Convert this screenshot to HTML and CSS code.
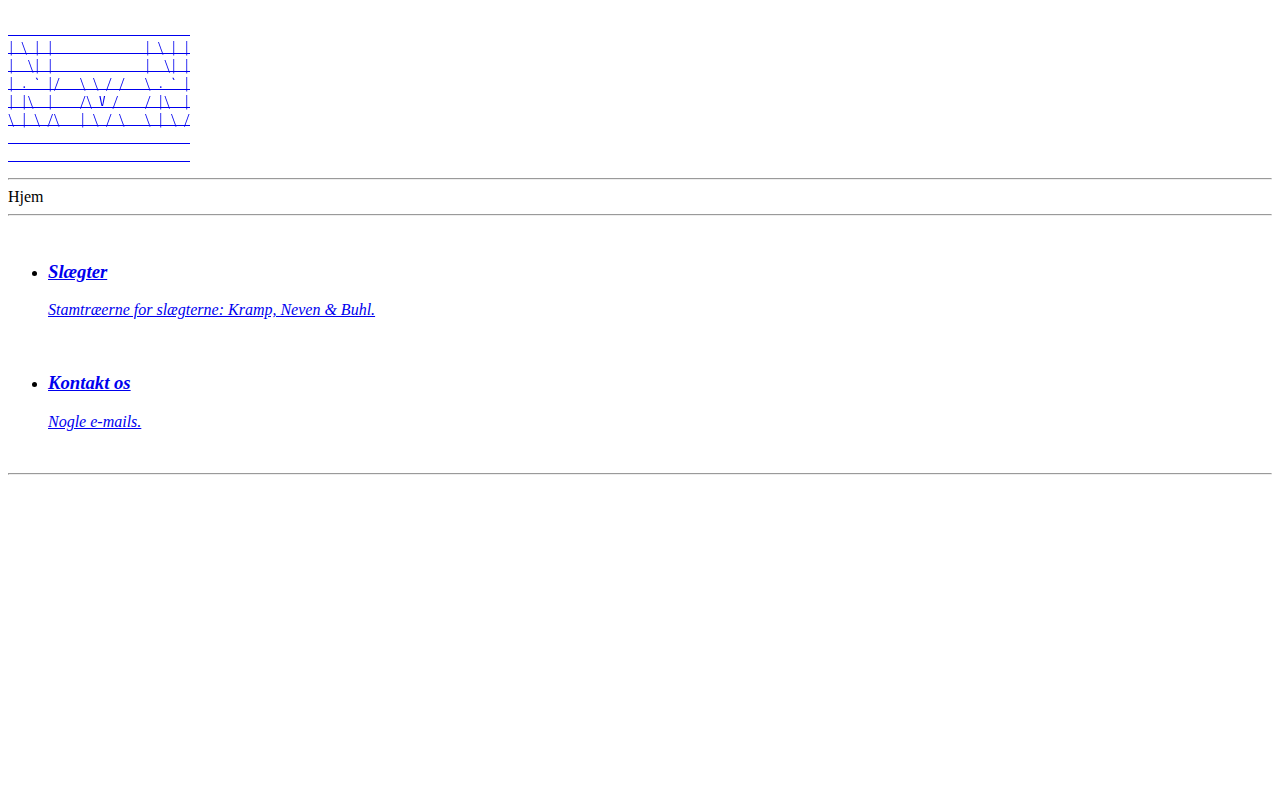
FILE: index.html
```
<!DOCTYPE html>
<html lang="da">
<head>
  <meta charset="UTF-8">
  <title>Hjem</title>
  <link rel="stylesheet" href="styles.css">
</head>
<body>
  <div class="logo">
    <a href="#" class="logo-link">____________________________<br>|&nbsp;\&nbsp;|&nbsp;|______________|&nbsp;\&nbsp;|&nbsp;|<br>|&nbsp;&nbsp;\|&nbsp;|______________|&nbsp;&nbsp;\|&nbsp;|<br>|&nbsp;.&nbsp;`&nbsp;|/&nbsp;&nbsp;&nbsp;\&nbsp;\&nbsp;/&nbsp;/&nbsp;&nbsp;&nbsp;\&nbsp;.&nbsp;`&nbsp;|<br>|&nbsp;|\&nbsp;&nbsp;|&nbsp;&nbsp;&nbsp;&nbsp;/\&nbsp;V&nbsp;/&nbsp;&nbsp;&nbsp;&nbsp;/&nbsp;|\&nbsp;&nbsp;|<br>\&nbsp;|&nbsp;\&nbsp;/\&nbsp;&nbsp;&nbsp;|&nbsp;\&nbsp;/&nbsp;\&nbsp;&nbsp;&nbsp;\&nbsp;|&nbsp;\&nbsp;/<br>____________________________<br>____________________________</a>
  </div>
  <hr>
  <div class="crumb">Hjem</div>
  <hr>
  <ul class="menu">
    <li>
      <a href="#">
        <h3>Slægter</h3>
        <p>Stamtræerne for slægterne: Kramp, Neven &amp; Buhl.</p>
      </a>
    </li>
    <li>
      <a href="#">
        <h3>Kontakt os</h3>
        <p>Nogle e-mails.</p>
      </a>
    </li>
  </ul>
  <hr>
</body>
</html>
```

FILE: styles.css
```
body {
  margin: 8px;
  font-family: "Liberation Serif", serif;
  font-size: 16px;
  color: #000;
  background: #fff;
}
a {
  color: #0000ee;
}
hr {
  margin: 8px 0;
}
.logo {
  padding-top: 12px;
  padding-bottom: 6px;
  line-height: 18px;
  will-change: opacity;
}
.logo-link {
  font-family: "Noto Sans Mono CJK JP", monospace;
  font-size: 13px;
  text-decoration-skip-ink: none;
  text-underline-offset: 1px;
}
.crumb {
  line-height: 18px;
}
.menu {
  margin: 0;
  padding: 18px 0 18px 40px;
}
.menu li {
  padding-bottom: 18px;
}
.menu li:last-child {
  padding-bottom: 0;
}
.menu h3 {
  margin: 18.72px 0;
  font-size: 18.72px;
  font-style: italic;
}
.menu p {
  margin: 16px 0;
  font-style: italic;
}
```
